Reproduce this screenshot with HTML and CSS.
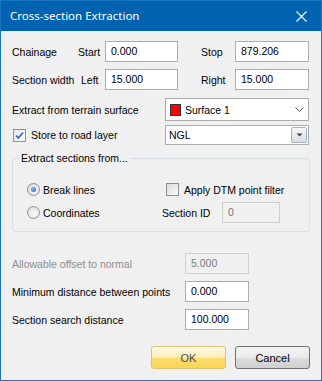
FILE: index.html
```html
<!DOCTYPE html>
<html lang="en">
<head>
    <meta charset="UTF-8">
    <title>Cross-section Extraction</title>
    <link rel="stylesheet" href="styles.css">
</head>
<body>

<div class="window">
    <!-- Title bar -->
    <div class="titlebar">
        <span class="title">Cross-section Extraction</span>
        <svg class="close" width="11" height="11" viewBox="0 0 11 11">
            <path d="M0.5 0.5 L10.5 10.5 M10.5 0.5 L0.5 10.5" stroke="#fff" stroke-width="1.1" fill="none"/>
        </svg>
    </div>

    <div class="content">
        <div class="row row-first">
            <span class="lbl lbl-main">Chainage</span>
            <span class="lbl lbl-sub">Start</span>
            <div class="input w73">0.000</div>
            <span class="lbl lbl-right">Stop</span>
            <div class="input w74">879.206</div>
        </div>

        <div class="row row-second">
            <span class="lbl lbl-main">Section width</span>
            <span class="lbl lbl-sub sub-left">Left</span>
            <div class="input w73">15.000</div>
            <span class="lbl lbl-right">Right</span>
            <div class="input w74">15.000</div>
        </div>

        <div class="row row-surface">
            <span class="lbl lbl-wide">Extract from terrain surface</span>
            <div class="combo">
                <span class="swatch"></span>
                <span class="combo-text">Surface 1</span>
                <svg class="chevron" width="9" height="5" viewBox="0 0 9 5">
                    <path d="M0.5 0.5 L4.5 4.5 L8.5 0.5" stroke="#555" stroke-width="1" fill="none"/>
                </svg>
            </div>
        </div>

        <div class="row row-layer">
            <label class="check lbl-wide">
                <span class="box checked">
                    <svg width="11" height="11" viewBox="0 0 11 11">
                        <path d="M2 5.5 L4.3 8 L9 2.5" stroke="#3464b8" stroke-width="1.8" fill="none"/>
                    </svg>
                </span>
                Store to road layer
            </label>
            <div class="combo combo-edit">
                <span class="combo-text ngl">NGL</span>
                <span class="drop-btn">
                    <svg width="7" height="4" viewBox="0 0 7 4">
                        <path d="M0.5 0.5 L6.5 0.5 L3.5 3.5 Z" fill="#444"/>
                    </svg>
                </span>
            </div>
        </div>

        <fieldset class="group">
            <legend>Extract sections from...</legend>
            <div class="group-grid">
                <label class="radio"><span class="dot selected"></span>Break lines</label>
                <label class="check check-dtm"><span class="box"></span>Apply DTM point filter</label>
                <label class="radio"><span class="dot"></span>Coordinates</label>
                <div class="section-id">
                    <span class="lbl">Section ID</span>
                    <div class="input disabled w58">0</div>
                </div>
            </div>
        </fieldset>

        <div class="row row-param row-offset">
            <span class="lbl lbl-param muted">Allowable offset to normal</span>
            <div class="input disabled w64">5.000</div>
        </div>
        <div class="row row-param">
            <span class="lbl lbl-param">Minimum distance between points</span>
            <div class="input w64">0.000</div>
        </div>
        <div class="row row-param">
            <span class="lbl lbl-param">Section search distance</span>
            <div class="input w64">100.000</div>
        </div>

        <!-- Buttons -->
        <div class="buttons">
            <button class="btn btn-ok">OK</button>
            <button class="btn">Cancel</button>
        </div>
    </div>
</div>

</body>
</html>
```

FILE: styles.css
```css
body {
    margin: 0;
    font-family: "Liberation Sans", Arial, sans-serif;
    font-size: 10.5px;
    color: #000;
    background: #f0f0f0;
}

.window {
    width: 322px;
    height: 381px;
    box-sizing: border-box;
    border: 1px solid #1c74c4;
    background: #f0f0f0;
}

/* Barra de titulo */
.titlebar {
    height: 30px;
    background: #0063b1;
    display: flex;
    align-items: center;
    padding: 0 14px 0 9px;
}

.title {
    flex: 1;
    color: #fff;
    font-family: "Noto Sans", sans-serif;
    font-size: 11.5px;
    padding-bottom: 1px;
}

.close {
    display: block;
}

.content {
    padding: 0 12px 0 11px;
}

.row {
    display: flex;
    align-items: center;
}

.row-first {
    margin-top: 10px;
}

.row-second {
    margin-top: 7px;
}

.lbl-main {
    width: 66px;
}

.lbl-sub {
    width: 27px;
}

.sub-left {
    width: 24px;
    padding-left: 3px;
}

.lbl-right {
    width: 34px;
    margin-left: 23px;
}

.input {
    box-sizing: border-box;
    height: 21px;
    line-height: 19px;
    padding-left: 5px;
    background: #fff;
    border: 1px solid #abadb3;
}

.input.disabled {
    background: #f0f0f0;
    border-color: #cfcfcf;
    color: #7a7a7a;
}

.w73 { width: 73px; }
.w74 { width: 74px; }
.w58 { width: 58px; }
.w64 { width: 64px; }

.row-surface {
    margin-top: 8px;
}

.lbl-wide {
    width: 153px;
}

.combo {
    box-sizing: border-box;
    width: 144px;
    height: 23px;
    background: #fff;
    border: 1px solid #acacac;
    display: flex;
    align-items: center;
    padding-left: 4px;
}

.swatch {
    width: 9px;
    height: 10px;
    background: #ff0000;
    border: 1px solid #333;
    margin-right: 4px;
}

.combo-text {
    flex: 1;
}

.chevron {
    margin-right: 4px;
}

.row-layer {
    margin-top: 4px;
}

.combo-edit {
    height: 20px;
    border-color: #abadb3;
    padding-left: 3px;
    padding-right: 1px;
}

.drop-btn {
    box-sizing: border-box;
    width: 16px;
    height: 16px;
    border: 1px solid #a4b3c3;
    border-radius: 2px;
    background: linear-gradient(#f7f7f7, #dadde1);
    display: flex;
    align-items: center;
    justify-content: center;
}

/* Checkbox e radio */
.check, .radio {
    display: flex;
    align-items: center;
}

.box {
    box-sizing: border-box;
    width: 13px;
    height: 13px;
    border: 1px solid #8e8f8f;
    background: linear-gradient(135deg, #dcdcdc, #fbfbfb);
    margin: 0 5px 0 1px;
    display: flex;
    align-items: center;
    justify-content: center;
}

.box.checked {
    background: linear-gradient(135deg, #e8e8e8, #fdfdfd);
}

.dot {
    box-sizing: border-box;
    width: 13px;
    height: 13px;
    border-radius: 50%;
    border: 1px solid #8e8f8f;
    background: radial-gradient(circle at 60% 60%, #fbfbfb, #d6d6d6);
    margin-right: 3px;
    display: flex;
    align-items: center;
    justify-content: center;
}

.dot.selected::after {
    content: "";
    width: 5px;
    height: 5px;
    border-radius: 50%;
    background: radial-gradient(circle at 40% 40%, #8fb7f0, #1f55b0);
}

/* Grupo */
.group {
    margin: 7px 0 0 0;
    padding: 0 0 8px 0;
    border: 1px solid #d5dfe5;
    border-radius: 3px;
    width: 298px;
    box-sizing: border-box;
}

.group legend {
    margin-left: 6px;
    padding: 0 2px;
    line-height: 13px;
}

.group-grid {
    display: grid;
    grid-template-columns: 135px auto;
    grid-template-rows: 21px 21px;
    row-gap: 2px;
    padding: 14px 0 0 14px;
    align-items: center;
}

.check-dtm {
    padding-left: 3px;
}

.section-id {
    display: flex;
    align-items: center;
}

.section-id .lbl {
    width: 60px;
}

.row-param {
    margin-top: 7px;
}

.row-offset {
    margin-top: 21px;
}

.lbl-param {
    width: 173px;
}

.muted {
    color: #8d8d8d;
}

/* Botoes */
.buttons {
    display: flex;
    justify-content: flex-end;
    gap: 9px;
    margin-top: 16px;
    margin-right: -1px;
}

.btn {
    width: 75px;
    height: 23px;
    font-family: "Liberation Sans", Arial, sans-serif;
    font-size: 11px;
    color: #000;
    border: 1px solid #707070;
    border-radius: 3px;
    background: linear-gradient(#f2f2f2 0%, #ebebeb 50%, #dddddd 51%, #cfcfcf 100%);
    padding: 0;
}

.btn-ok {
    color: #4a4a4a;
    border-color: #d8c17a;
    background: linear-gradient(#fef8e4 0%, #fdeeb9 50%, #fbdc72 51%, #fcd551 100%);
}
```
